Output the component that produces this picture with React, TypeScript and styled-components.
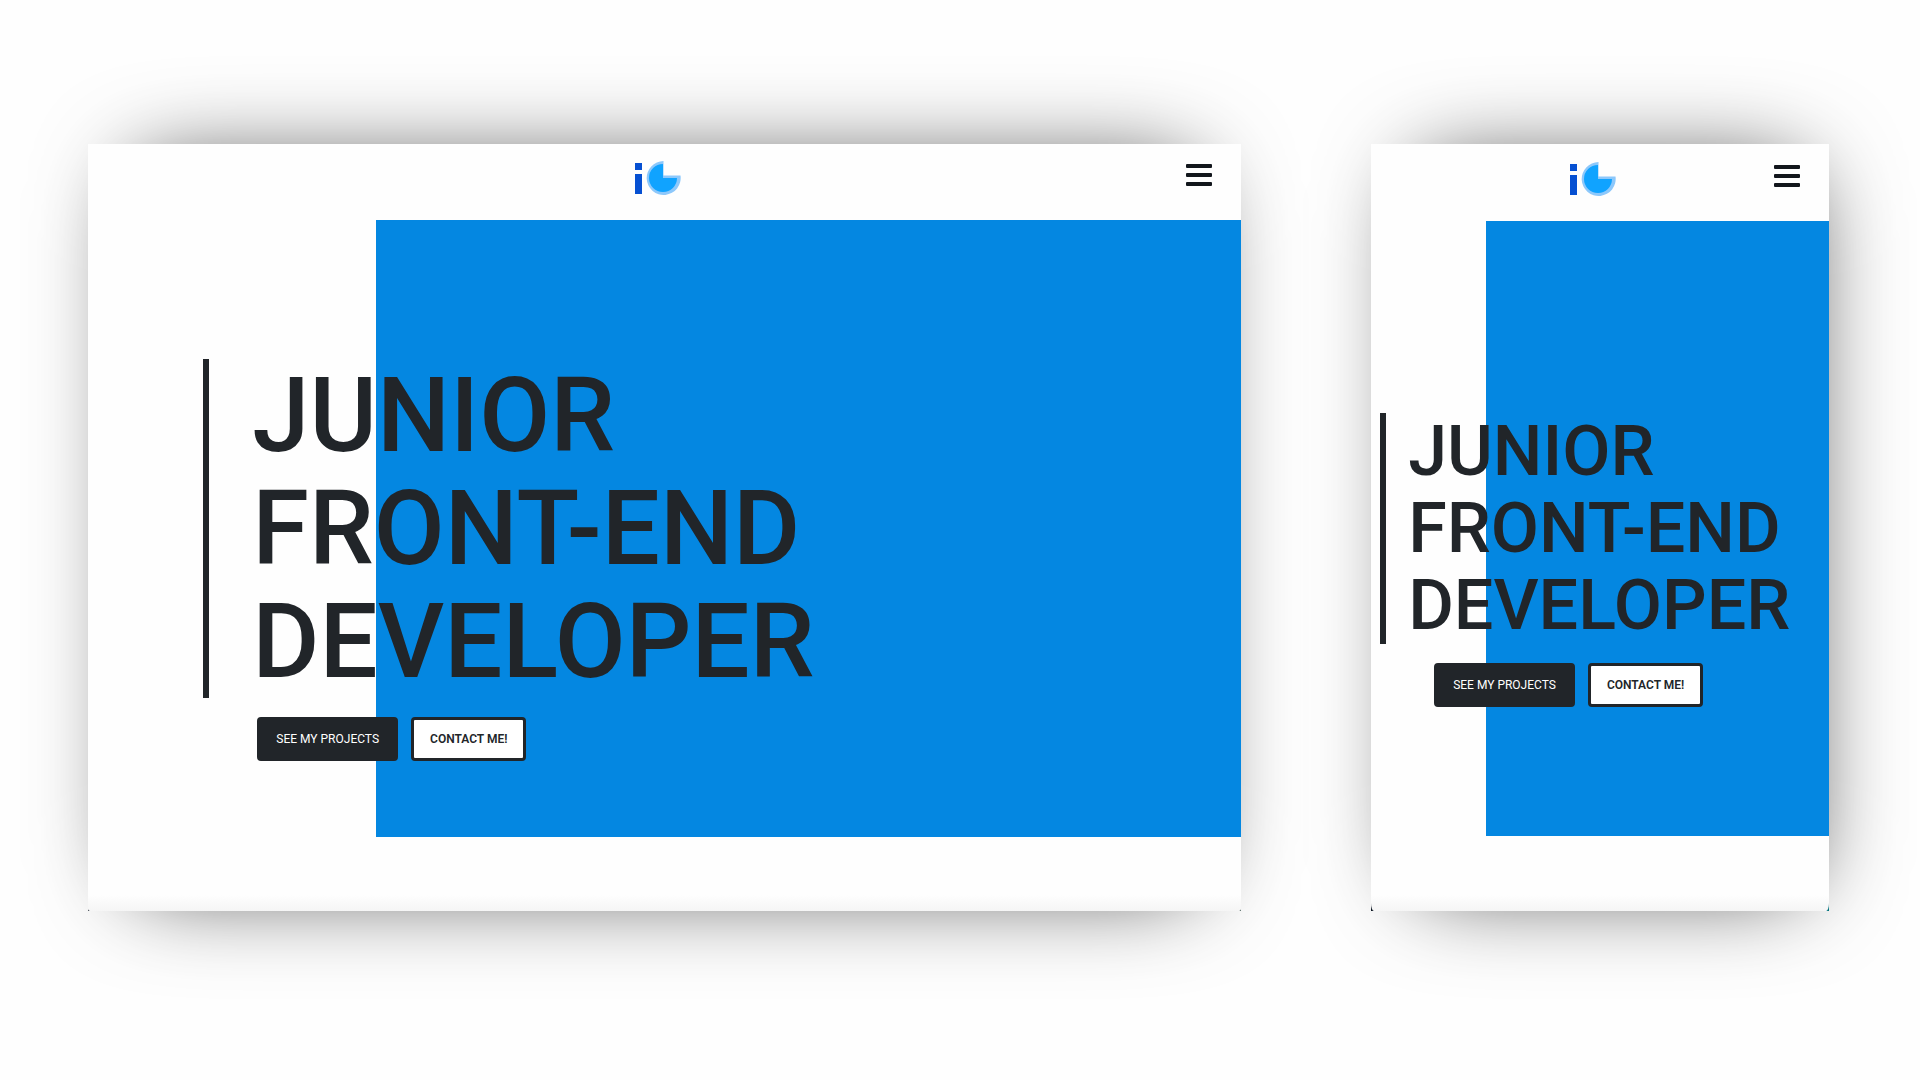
import React from "react";
import styled, { createGlobalStyle } from "styled-components";

const ink = "#212529";
const blue = "#0487e1";

const GlobalStyle = createGlobalStyle`
  *, *::before, *::after { box-sizing: border-box; }
  body {
    margin: 0;
    background: #fefefe;
    color: ${ink};
    font-family: Roboto, "Liberation Sans", sans-serif;
  }
`;

type Size = { $compact: boolean };

const Showcase = styled.div`
  display: grid;
  grid-template-columns: 1153fr 458fr;
  gap: 130px;
  min-height: 100vh;
  padding: 144px 91px 169px 88px;
  isolation: isolate;
  overflow: hidden;
`;

const Device = styled.section<Size>`
  position: relative;
  display: flex;
  background: linear-gradient(90deg, #0a1420 50%, ${(p) => (p.$compact ? "#00727c" : "#24423a")} 50%);

  &::before {
    content: "";
    position: absolute;
    z-index: -1;
    inset: 20px ${(p) => (p.$compact ? 20 : 40)}px 20px 40px;
    border-radius: 40px;
    box-shadow: 0 0 90px rgba(0, 0, 0, 0.73);
  }
`;

const Screen = styled.div<Size>`
  flex: 1;
  display: flex;
  flex-direction: column;
  border-radius: ${(p) => (p.$compact ? "0 0 3px 3px / 0 0 8px 8px" : "0 0 2px 2px")};
  background: linear-gradient(to top, #f5f5f5, #fefefe 16px);
`;

const Header = styled.header<Size>`
  display: grid;
  grid-template-columns: 1fr 60px 1fr;
  align-items: start;
  height: ${(p) => (p.$compact ? 77 : 76)}px;
  padding: ${(p) => (p.$compact ? 18 : 17)}px 29px 0;
`;

const LogoLink = styled.a`
  grid-column: 2;
  display: block;
  line-height: 0;
`;

const MenuButton = styled.button`
  justify-self: end;
  display: flex;
  flex-direction: column;
  gap: 5px;
  width: 26px;
  padding: 3px 0;
  border: 0;
  background: none;
  cursor: pointer;
`;

const Bar = styled.span`
  height: 4px;
  width: 100%;
  border-radius: 1px;
  background: #12161c;
`;

const Hero = styled.main<Size>`
  flex: 1;
  display: grid;
  grid-template-columns: 1fr 3fr;
  grid-template-rows: 1fr ${(p) => (p.$compact ? 75 : 74)}px;
`;

const ColorPanel = styled.div`
  grid-area: 1 / 2;
  background: ${blue};
`;

const Intro = styled.div<Size>`
  grid-area: 1 / 1 / -1 / -1;
  display: flex;
  flex-direction: column;
  justify-content: center;
  gap: 19px;
  padding: 0 0 12px ${(p) => (p.$compact ? "2%" : "10%")};
`;

const Title = styled.h1<Size>`
  margin: 0;
  padding-left: ${(p) => (p.$compact ? 22 : 43)}px;
  border-left: 6px solid ${ink};
  font-size: ${(p) => (p.$compact ? 70 : 103)}px;
  line-height: ${(p) => (p.$compact ? 77 : 113)}px;
  font-weight: 500;
  text-transform: uppercase;
`;

const TitleLine = styled.span`
  display: block;
  white-space: nowrap;
`;

const Actions = styled.div`
  display: flex;
  gap: 13px;
  padding-left: 54px;
`;

const ActionButton = styled.button<{ $outlined?: boolean }>`
  height: 44px;
  padding: 0 16px;
  border: 3px solid ${ink};
  border-radius: 4px;
  background: ${(p) => (p.$outlined ? "#fff" : ink)};
  color: ${(p) => (p.$outlined ? ink : "#fff")};
  font: ${(p) => (p.$outlined ? 600 : 400)} 12px Roboto, "Liberation Sans", sans-serif;
  text-transform: uppercase;
  white-space: nowrap;
  cursor: pointer;
`;

function Logo() {
  return (
    <svg width="60" height="34" viewBox="0 0 60 34" aria-hidden="true">
      <rect x="0" y="2" width="7" height="7" fill="#0650d2" />
      <rect x="0" y="13" width="7" height="20" fill="#0650d2" />
      <path d="M29 0A17 17 0 1 0 46 14.500H29Z" transform="translate(-0.500 0)" fill="#8dc8fb" />
      <path d="M28 3A14 14 0 1 0 42 17H28Z" fill="#10a3ff" />
    </svg>
  );
}

function Preview({ compact = false }: { compact?: boolean }) {
  return (
    <Device $compact={compact}>
      <Screen $compact={compact}>
        <Header $compact={compact}>
          <LogoLink href="#home" aria-label="Home">
            <Logo />
          </LogoLink>
          <MenuButton type="button" aria-label="Open menu">
            <Bar />
            <Bar />
            <Bar />
          </MenuButton>
        </Header>
        <Hero $compact={compact}>
          <ColorPanel />
          <Intro $compact={compact}>
            <Title $compact={compact}>
              <TitleLine>Junior </TitleLine>
              <TitleLine>Front-end </TitleLine>
              <TitleLine>Developer</TitleLine>
            </Title>
            <Actions>
              <ActionButton type="button">See my projects</ActionButton>
              <ActionButton type="button" $outlined>
                Contact me!
              </ActionButton>
            </Actions>
          </Intro>
        </Hero>
      </Screen>
    </Device>
  );
}

export default function App() {
  return (
    <>
      <GlobalStyle />
      <Showcase>
        <Preview />
        <Preview compact />
      </Showcase>
    </>
  );
}
